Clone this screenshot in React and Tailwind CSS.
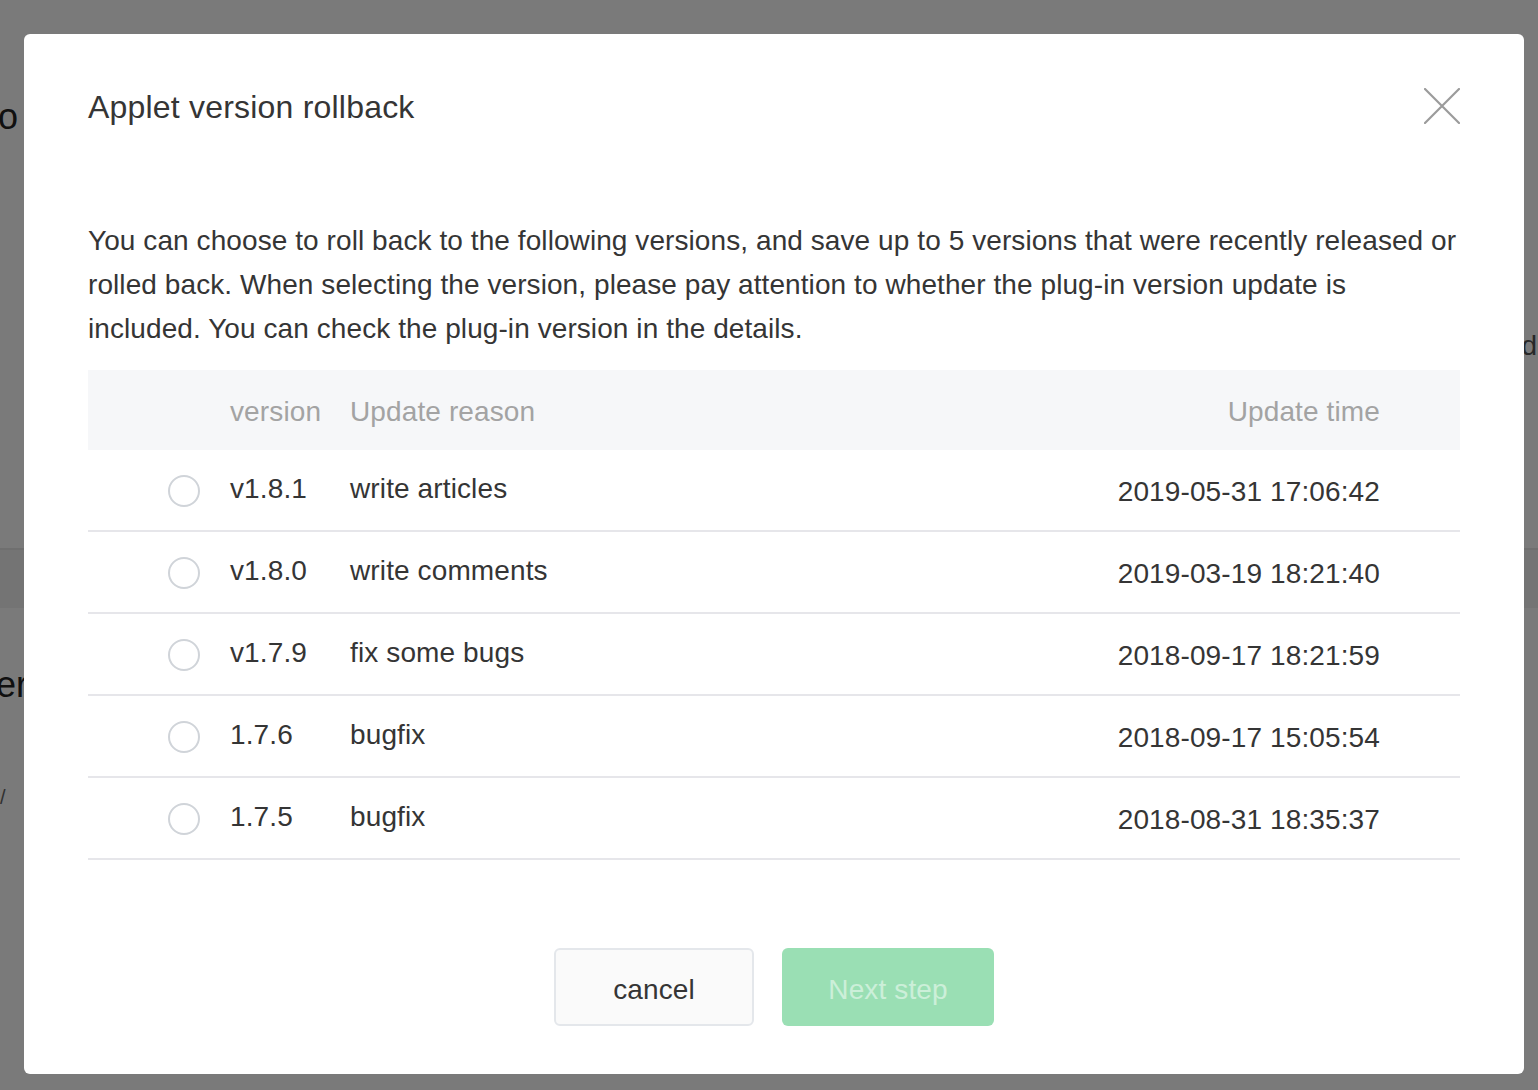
const versions = [
  { v: 'v1.8.1', reason: 'write articles', time: '2019-05-31 17:06:42' },
  { v: 'v1.8.0', reason: 'write comments', time: '2019-03-19 18:21:40' },
  { v: 'v1.7.9', reason: 'fix some bugs', time: '2018-09-17 18:21:59' },
  { v: '1.7.6', reason: 'bugfix', time: '2018-09-17 15:05:54' },
  { v: '1.7.5', reason: 'bugfix', time: '2018-08-31 18:35:37' },
]

function BackgroundPage() {
  return (
    <div className="absolute inset-0 overflow-hidden bg-white text-[#222]">
      <div className="h-[550px] border-b-2 border-[#e9e9e9] relative">
        <div className="pt-[90px] text-[36px] leading-[54px] -ml-[2px]">o</div>
        <div className="absolute right-[1px] top-[325px] text-[28px] text-[#555]">d</div>
      </div>
      <div className="h-[58px] bg-[#f2f2f2]"></div>
      <div className="pt-[50px] -ml-[4px] text-[36px] leading-[54px]">er</div>
      <div className="pt-[70px] text-[20px] text-[#666]">/</div>
    </div>
  )
}

function Radio() {
  return <span className="block w-[32px] h-[32px] rounded-full border-2 border-[#d0d4d9] bg-white" />
}

export default function App() {
  return (
    <div className="relative w-[1538px] h-[1090px] overflow-hidden" style={{ fontFamily: '"Liberation Sans", Arial, sans-serif' }}>
      <BackgroundPage />
      <div className="absolute inset-0 bg-black/[0.52]" />

      <div className="absolute left-[24px] top-[34px] w-[1500px] h-[1040px] bg-white rounded-[6px] px-[64px] pt-[49px] flex flex-col tracking-[0.12px]">
        <div className="flex items-center justify-between h-[48px]">
          <h2 className="text-[32px] leading-[48px] text-[#353535] tracking-[0.2px]">Applet version rollback</h2>
          <button className="w-[36px] h-[36px] -mt-[2px] text-[#9b9b9b]">
            <svg viewBox="0 0 36 36" width="36" height="36" fill="none" stroke="currentColor" strokeWidth="2.2" strokeLinecap="round">
              <path d="M1 1 L35 35 M35 1 L1 35" />
            </svg>
          </button>
        </div>

        <p className="mt-[88px] text-[28px] leading-[44px] text-[#353535] tracking-[0.08px]">
          You can choose to roll back to the following versions, and save up to 5 versions that were recently released or rolled back. When selecting the version, please pay attention to whether the plug-in version update is included. You can check the plug-in version in the details.
        </p>

        <div className="mt-[19px] text-[28px]">
          <div className="h-[80px] bg-[#f6f7f9] flex items-center text-[#a3a3a3] pt-[3px]">
            <div className="w-[142px]" />
            <div className="w-[120px]">version</div>
            <div className="flex-1">Update reason</div>
            <div className="pr-[80px]">Update time</div>
          </div>
          {versions.map((r) => (
            <div key={r.time} className="h-[82px] border-b-2 border-[#e6e6ea] flex items-center text-[#353535]">
              <div className="w-[142px] pl-[80px] pt-[2px]">
                <Radio />
              </div>
              <div className="w-[120px] -mt-[2px]">{r.v}</div>
              <div className="flex-1 -mt-[2px]">{r.reason}</div>
              <div className="pr-[80px] pt-[3px]">{r.time}</div>
            </div>
          ))}
        </div>

        <div className="mt-[88px] flex justify-center gap-[28px]">
          <button className="w-[200px] h-[78px] pt-[6px] rounded-[6px] border-2 border-[#e4e7eb] bg-[#fafafa] text-[28px] text-[#353535]">
            cancel
          </button>
          <button disabled className="w-[212px] h-[78px] pt-[6px] rounded-[6px] bg-[#9adfb4] text-[28px] text-white/50">
            Next step
          </button>
        </div>
      </div>
    </div>
  )
}
